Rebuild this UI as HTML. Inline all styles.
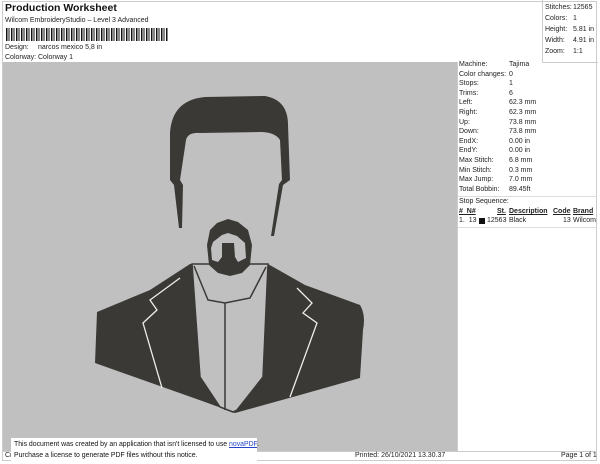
<!DOCTYPE html>
<html><head><style>
body{margin:0;width:600px;height:464px;background:#fff;font-family:"Liberation Sans",sans-serif;color:#222;position:relative;overflow:hidden}
.a{position:absolute;white-space:nowrap;font-size:7px;line-height:10px}
</style></head><body>
<div style="position:absolute;left:2px;top:1px;width:595px;height:460px;border:1px solid #ccc;box-sizing:border-box"></div>
<div class="a" style="left:5px;top:2px;font-size:10.5px;font-weight:bold;line-height:13px;color:#111">Production Worksheet</div>
<div class="a" style="left:5px;top:16px">Wilcom EmbroideryStudio – Level 3 Advanced</div>
<div style="position:absolute;left:6px;top:28px;width:162px;height:13px;background:repeating-linear-gradient(90deg,#111 0 1.5px,#fff 1.5px 2.5px,#111 2.5px 3.5px,#fff 3.5px 5px)"></div>
<div class="a" style="left:5px;top:43px">Design:</div><div class="a" style="left:38px;top:43px">narcos mexico 5,8 in</div>
<div class="a" style="left:5px;top:53px">Colorway:</div><div class="a" style="left:38px;top:53px">Colorway 1</div>
<div style="position:absolute;left:542px;top:0;width:55px;height:62px;border-left:1px solid #ccc;border-bottom:1px solid #ccc"></div>
<div class="a" style="left:545px;top:2px;line-height:11px">Stitches:<br>Colors:<br>Height:<br>Width:<br>Zoom:</div>
<div class="a" style="left:573px;top:2px;line-height:11px">12565<br>1<br>5.81 in<br>4.91 in<br>1:1</div>
<div style="position:absolute;left:3px;top:62px;width:454px;height:389px;background:#c0c0c0"></div>
<div style="position:absolute;left:457px;top:62px;width:1px;height:389px;background:#ccc"></div>
<div class="a" style="left:459px;top:60px;line-height:9.6px">Machine:<br>Color changes:<br>Stops:<br>Trims:<br>Left:<br>Right:<br>Up:<br>Down:<br>EndX:<br>EndY:<br>Max Stitch:<br>Min Stitch:<br>Max Jump:<br>Total Bobbin:</div>
<div class="a" style="left:509px;top:60px;line-height:9.6px">Tajima<br>0<br>1<br>6<br>62.3 mm<br>62.3 mm<br>73.8 mm<br>73.8 mm<br>0.00 in<br>0.00 in<br>6.8 mm<br>0.3 mm<br>7.0 mm<br>89.45ft</div>
<div style="position:absolute;left:458px;top:196px;width:139px;height:1px;background:#ddd"></div>
<div class="a" style="left:459px;top:197px">Stop Sequence:</div>
<div class="a" style="left:459px;top:207px;font-weight:bold;text-decoration:underline">#&nbsp; N#</div>
<div class="a" style="left:497px;top:207px;font-weight:bold;text-decoration:underline">St.</div>
<div class="a" style="left:509px;top:207px;font-weight:bold;text-decoration:underline">Description</div>
<div class="a" style="left:553px;top:207px;font-weight:bold;text-decoration:underline">Code</div>
<div class="a" style="left:573px;top:207px;font-weight:bold;text-decoration:underline">Brand</div>
<div class="a" style="left:459px;top:216px">1.&nbsp; 13</div>
<div style="position:absolute;left:479px;top:218px;width:6px;height:6px;background:#111"></div>
<div class="a" style="left:487px;top:216px">12563</div>
<div class="a" style="left:509px;top:216px">Black</div>
<div class="a" style="left:563px;top:216px">13</div>
<div class="a" style="left:573px;top:216px">Wilcom</div>
<div style="position:absolute;left:458px;top:227px;width:139px;height:1px;background:#ddd"></div>
<svg style="position:absolute;left:0;top:0" width="600" height="464">
<g fill="#3a3936">
<path d="M170,133 Q172,100 205,97 L265,96 Q288,100 288,125 L290,180 L283,185 L274,236 L271,236 L279,184 L282,180 L280,140 Q275,132 260,132 L200,133 Q188,132 186,140 L180,180 L183,185 L182,228 L179,228 L174,185 L170,180 Z"/>
<path d="M97,312 L150,290 L190,264 L268,264 L305,285 L360,305 Q366,315 363,330 L360,378 L300,395 L235,413 L205,402 L95,363 Z"/>
</g>
<path d="M192,264 L200,377 L220,407 L233,412 L237,410 L263,377 L268,264 Z" fill="#c0c0c0" stroke="#3a3936" stroke-width="1.5"/>
<path d="M225,303 L225,410 M194,266 L208,300 L225,303 L250,298 L266,267" fill="none" stroke="#3a3936" stroke-width="1.5"/>
<path fill="#3a3936" fill-rule="evenodd" d="M217,223 L228,219 L238,222 L248,230 L252,245 L250,265 L242,273 L230,276 L218,273 L209,265 L207,245 L210,230 Z M213,242 L222,235 L228,233 L237,236 L245,243 L246,258 L238,262 L235,257 L234,243 L222,243 L222,257 L218,262 L212,260 L211,248 Z"/>
<g fill="none" stroke="#eee" stroke-width="1.3">
<path d="M180,278 L150,300 L157,310 L143,323 L162,388"/>
<path d="M297,288 L312,303 L303,313 L317,323 L290,397"/>
</g>
</svg>
<div style="position:absolute;left:3px;top:451px;width:594px;height:1px;background:#ccc"></div>
<div class="a" style="left:5px;top:451px">Cr</div>
<div class="a" style="left:355px;top:451px">Printed: 26/10/2021 13.30.37</div>
<div class="a" style="left:561px;top:451px">Page 1 of 1</div>
<div style="position:absolute;left:11px;top:438px;width:246px;height:26px;background:#fff"></div>
<div class="a" style="left:14px;top:439px;font-size:6.9px;line-height:11px;color:#111">This document was created by an application that isn't licensed to use <span style="color:#2244cc;text-decoration:underline">novaPDF</span>.<br>Purchase a license to generate PDF files without this notice.</div>
</body></html>
